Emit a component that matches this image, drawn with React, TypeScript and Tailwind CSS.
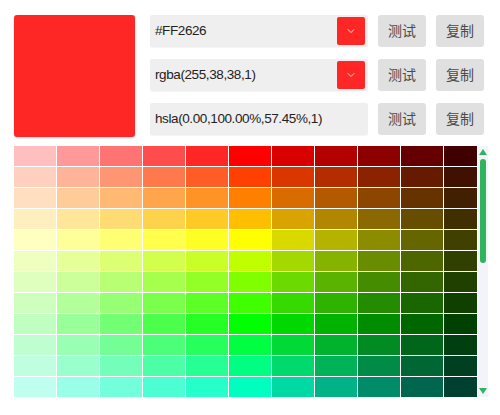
import { ChevronDown } from 'lucide-react';

// Palette: 24 hue rows, 11 columns (tints -> pure -> shades)
const HUES = Array.from({ length: 24 }, (_, i) => i * 15);
const LIGHTNESS = [87.5, 80, 72.5, 65, 57.5, 50, 42.5, 35, 27.5, 20, 12.5];

function ValueRow({ value, dropdown }: { value: string; dropdown?: boolean }) {
  return (
    <div className="flex items-center gap-[10px]">
      <div className="flex h-8 w-[218px] items-center justify-between rounded-[2px] bg-[#efefef] pl-[5px] pr-[3px] shadow-[0_1px_1px_rgba(0,0,0,0.04)]">
        <span className="text-[13.5px] tracking-[-0.4px] text-[#222]">{value}</span>
        {dropdown && (
          <button className="flex h-7 w-7 items-center justify-center rounded-[2px] bg-[#ff2626]">
            <ChevronDown className="h-3 w-3 text-white" strokeWidth={1.6} />
          </button>
        )}
      </div>
      <button className="h-8 w-12 rounded-[3px] bg-[#e0e0e0] text-[14px] text-[#4a4a4a]">测试</button>
      <button className="h-8 w-12 rounded-[3px] bg-[#e0e0e0] text-[14px] text-[#4a4a4a]">复制</button>
    </div>
  );
}

function FakeScrollbar() {
  return (
    <div className="flex h-[251px] w-[10px] flex-col items-center bg-[#f2f4f9]">
      <svg width="10" height="8" viewBox="0 0 10 8" className="mt-[2px]">
        <path d="M5 1 L9 7 L1 7 Z" fill="#2fb35c" />
      </svg>
      <div className="mt-[3px] h-[104px] w-[6px] rounded-full bg-[#2fb35c]" />
      <div className="flex-1" />
      <svg width="10" height="8" viewBox="0 0 10 8" className="mb-[2px]">
        <path d="M1 1 L9 1 L5 7 Z" fill="#2fb35c" />
      </svg>
    </div>
  );
}

export default function App() {
  return (
    <div
      className="flex h-[415px] w-[500px] flex-col bg-white pl-[14px] pt-[15px]"
      style={{ fontFamily: '"Liberation Sans", Arial, "Noto Sans CJK SC", sans-serif' }}
    >
      <div className="flex gap-[15px]">
        <div className="h-[122px] w-[121px] rounded-[3px] bg-[#ff2626] shadow-[0_1px_2px_rgba(0,0,0,0.15)]" />
        <div className="flex flex-col gap-[12px]">
          <ValueRow value="#FF2626" dropdown />
          <ValueRow value="rgba(255,38,38,1)" dropdown />
          <ValueRow value="hsla(0.00,100.00%,57.45%,1)" />
        </div>
      </div>

      <div className="mt-[9px] flex gap-px">
        <div className="h-[251px] w-[463px] overflow-hidden">
          <div className="grid grid-cols-[repeat(10,42px)_1fr] gap-px bg-white">
            {HUES.map((h) =>
              LIGHTNESS.map((l, c) => (
                <div
                  key={`${h}-${c}`}
                  className="h-5"
                  style={{ backgroundColor: `hsl(${h}, 100%, ${l}%)` }}
                />
              ))
            )}
          </div>
        </div>
        <FakeScrollbar />
      </div>
    </div>
  );
}
